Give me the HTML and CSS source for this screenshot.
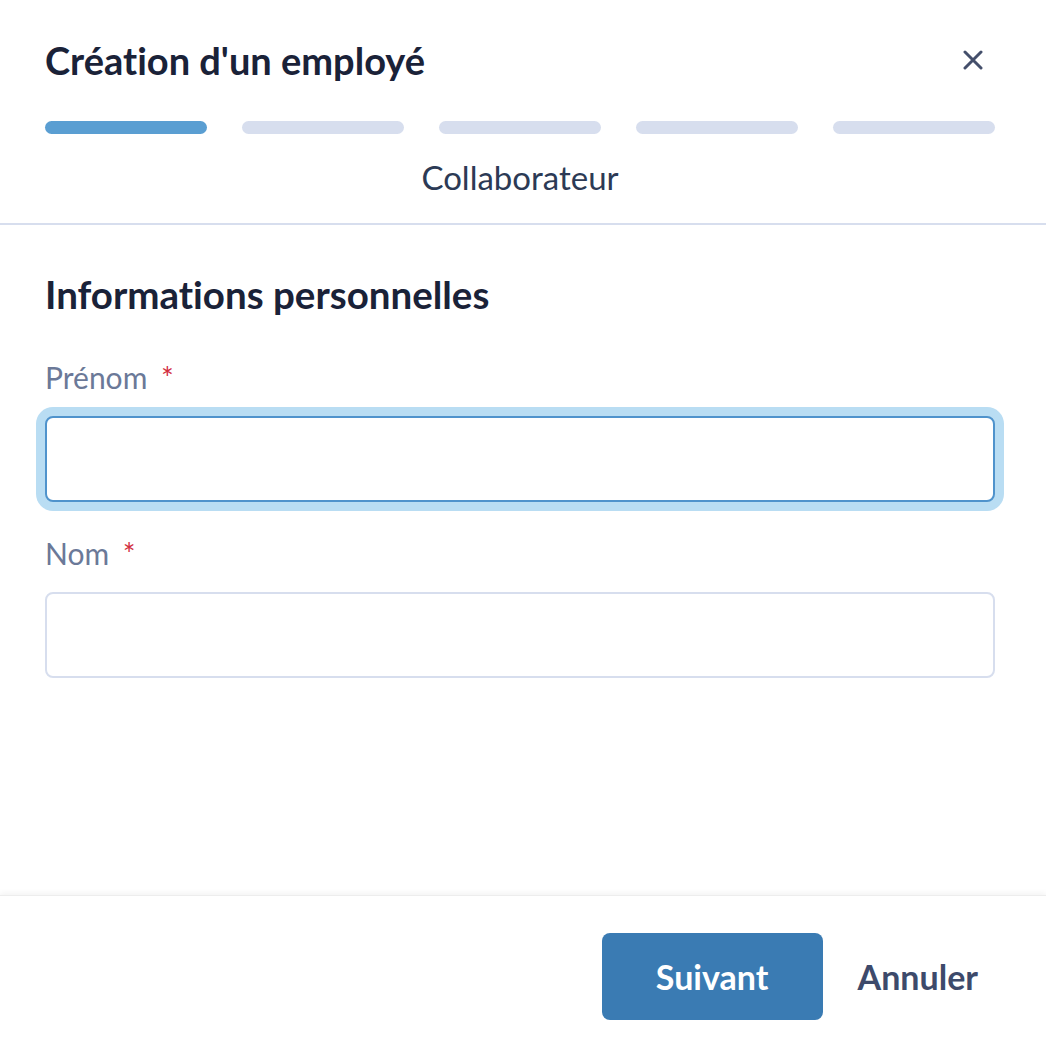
FILE: index.html
```html
<!DOCTYPE html>
<html lang="fr">
<head>
    <meta charset="UTF-8">
    <meta name="viewport" content="width=device-width, initial-scale=1.0">
    <title>Création d'un employé</title>
    <link rel="stylesheet" href="styles.css">
</head>
<body>

    <div class="modal">
        <div class="modal-header">
            <div class="title-row">
                <h1>Création d'un employé</h1>
                <button class="close" aria-label="Fermer">
                    <svg width="20" height="20" viewBox="0 0 20 20">
                        <path d="M2 2 L18 18 M18 2 L2 18" stroke="#444f6b" stroke-width="3" stroke-linecap="round"/>
                    </svg>
                </button>
            </div>
            <div class="steps">
                <span class="step active"></span>
                <span class="step"></span>
                <span class="step"></span>
                <span class="step"></span>
                <span class="step"></span>
            </div>
            <p class="step-name">Collaborateur</p>
        </div>

        <div class="modal-body">
            <h2>Informations personnelles</h2>

            <label class="field" for="firstname">
                <span class="label">Prénom <span class="required">*</span></span>
                <input type="text" id="firstname" class="focused">
            </label>

            <label class="field" for="lastname">
                <span class="label">Nom <span class="required">*</span></span>
                <input type="text" id="lastname">
            </label>
        </div>

        <div class="modal-footer">
            <button class="btn-primary">Suivant</button>
            <button class="btn-link">Annuler</button>
        </div>
    </div>

</body>
</html>
```

FILE: styles.css
```css
* {
    box-sizing: border-box;
}
body {
    margin: 0;
    font-family: Lato, "Open Sans", sans-serif;
    font-variant-ligatures: none;
    background: white;
    color: #1a2238;
}
.modal {
    display: flex;
    flex-direction: column;
    height: 100vh;
}
.modal-header {
    padding: 30px 51px 0 45px;
    border-bottom: 2px solid #d7deee;
}
.title-row {
    display: flex;
    justify-content: space-between;
    align-items: center;
}
h1 {
    margin: 0;
    font-size: 38px;
    font-weight: 700;
    line-height: 60px;
    color: #1a2238;
}
.close {
    background: none;
    border: none;
    padding: 0;
    margin-right: 12px;
    width: 20px;
    height: 20px;
    cursor: pointer;
}
.steps {
    display: flex;
    gap: 35px;
    margin-top: 31px;
}
.step {
    flex: 1;
    height: 13px;
    border-radius: 7px;
    background: #d7deee;
}
.step.active {
    background: #5a9ed2;
}
.step-name {
    margin: 0;
    padding: 23px 0 26px;
    text-align: center;
    font-size: 33px;
    line-height: 40px;
    color: #2c3a55;
}
.modal-body {
    flex: 1;
    padding: 47px 51px 0 45px;
}
h2 {
    margin: 0 0 43px;
    font-size: 38.5px;
    font-weight: 700;
    line-height: 44px;
    color: #1a2238;
}
.field {
    display: block;
    margin-bottom: 33px;
}
.label {
    display: block;
    font-size: 30px;
    line-height: 36px;
    color: #6b7998;
    margin-bottom: 21px;
}
.required {
    color: #d22f3f;
    margin-left: 6px;
}
input {
    display: block;
    width: 100%;
    height: 86px;
    border: 2px solid #d7deee;
    border-radius: 8px;
    padding: 0 20px;
    font-size: 28px;
    font-family: inherit;
    outline: none;
}
input.focused {
    border-color: #4f93cc;
    box-shadow: 0 0 0 9px #b9ddf3;
}
.modal-footer {
    display: flex;
    justify-content: flex-end;
    align-items: center;
    gap: 35px;
    height: 161px;
    padding: 0 68px 0 46px;
    box-shadow: 0 -2px 6px rgba(0,0,0,0.05);
    border-top: 1px solid #ededed;
}
.btn-primary {
    width: 221px;
    height: 87px;
    border: none;
    border-radius: 8px;
    background: #3a7bb3;
    color: white;
    font-family: inherit;
    font-size: 34px;
    font-weight: 700;
    cursor: pointer;
}
.btn-link {
    background: none;
    border: none;
    padding: 0;
    font-family: inherit;
    font-size: 34px;
    font-weight: 700;
    color: #3d4a6b;
    cursor: pointer;
}
```
